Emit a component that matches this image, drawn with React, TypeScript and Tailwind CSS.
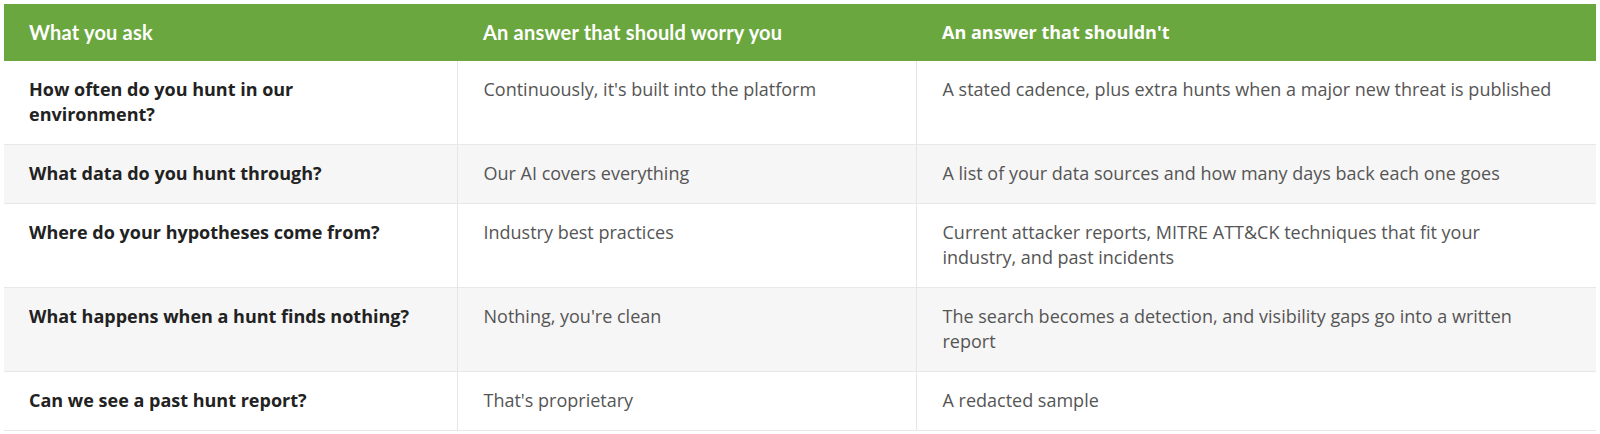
import React from 'react';

const rows = [
  {
    ask: 'How often do you hunt in our environment?',
    worry: "Continuously, it's built into the platform",
    ok: 'A stated cadence, plus extra hunts when a major new threat is published',
  },
  {
    ask: 'What data do you hunt through?',
    worry: 'Our AI covers everything',
    ok: 'A list of your data sources and how many days back each one goes',
  },
  {
    ask: 'Where do your hypotheses come from?',
    worry: 'Industry best practices',
    ok: 'Current attacker reports, MITRE ATT&CK techniques that fit your industry, and past incidents',
  },
  {
    ask: 'What happens when a hunt finds nothing?',
    worry: "Nothing, you're clean",
    ok: 'The search becomes a detection, and visibility gaps go into a written report',
  },
  {
    ask: 'Can we see a past hunt report?',
    worry: "That's proprietary",
    ok: 'A redacted sample',
  },
];

export default function App() {
  return (
    <div className="bg-white p-1 font-['Open_Sans',sans-serif]">
      <table className="w-full table-fixed border-collapse text-left">
        <colgroup>
          <col className="w-[453px]" />
          <col className="w-[459px]" />
          <col />
        </colgroup>
        <thead>
          <tr className="bg-[#6ba73f] text-white leading-[25px]">
            <th className="pl-[25px] pr-[43px] py-4 h-[57px] text-[20px] font-bold tracking-[0.01em] font-['Lato',sans-serif]">
              What you ask
            </th>
            <th className="pl-[26px] pr-[43px] py-4 h-[57px] text-[20px] font-bold tracking-[0.01em] font-['Lato',sans-serif]">
              An answer that should worry you
            </th>
            <th className="pl-[26px] pr-[43px] py-4 h-[57px] text-[18px] font-bold">
              An answer that shouldn't
            </th>
          </tr>
        </thead>
        <tbody className="text-[18px] leading-[25px]">
          {rows.map((r, i) => (
            <tr key={r.ask} className={`border-b border-[#e8e8e8] ${i % 2 === 1 ? 'bg-[#f6f6f6]' : 'bg-white'}`}>
              <td className="pl-[25px] pr-[43px] pt-[16px] pb-[17px] align-top font-bold text-[#222222] border-r border-[#e6e6e6]">
                {r.ask}
              </td>
              <td className="pl-[26px] pr-[43px] pt-[16px] pb-[17px] align-top text-[#555555] border-r border-[#e6e6e6]">
                {r.worry}
              </td>
              <td className="pl-[26px] pr-[43px] pt-[16px] pb-[17px] align-top text-[#555555]">{r.ok}</td>
            </tr>
          ))}
        </tbody>
      </table>
    </div>
  );
}
